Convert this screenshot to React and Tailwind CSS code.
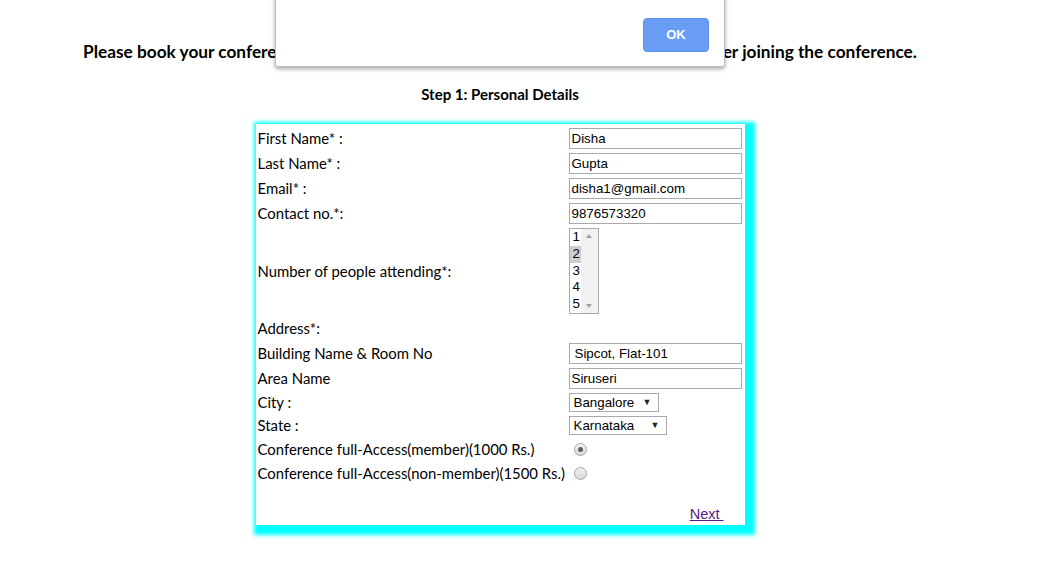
import React from 'react'

const label = "font-['Lato','Noto_Sans',sans-serif] text-[14.9px] text-black leading-none"
const field = "font-['Liberation_Sans',Arial,sans-serif] text-[13.33px] text-black"

function TextBox({ value, indent }) {
  return (
    <div className={`w-[173px] h-[21px] border border-[#a9a9a9] flex items-center ${indent ? 'pl-[5px]' : 'pl-[2px]'} ${field}`}>
      {value}
    </div>
  )
}

function DropDown({ value, width }) {
  return (
    <div className={`${width} h-[19px] border border-[#a9a9a9] flex items-center justify-between pl-[4px] pr-[6px] ${field}`}>
      <span>{value}</span>
      <span className="text-[9px] text-[#222]">▼</span>
    </div>
  )
}

function ListBox() {
  const items = ['1', '2', '3', '4', '5']
  return (
    <div className={`w-[30px] h-[86px] border border-[#a9a9a9] flex ${field}`}>
      <div className="flex flex-col">
        {items.map(n => (
          <div key={n} className={`w-[11px] h-[17px] pl-[3px] leading-[16px] ${n === '2' ? 'bg-[#cecece]' : ''}`}>{n}</div>
        ))}
      </div>
      <div className="flex-1 bg-[#f1f1f1] flex flex-col items-center justify-between py-[5px]">
        <div className="w-0 h-0 border-l-[3.5px] border-r-[3.5px] border-b-[4px] border-l-transparent border-r-transparent border-b-[#a3a3a3]" />
        <div className="w-0 h-0 border-l-[3.5px] border-r-[3.5px] border-t-[4px] border-l-transparent border-r-transparent border-t-[#a3a3a3]" />
      </div>
    </div>
  )
}

function Radio({ checked }) {
  return (
    <div className="ml-[5px] w-[13px] h-[13px] rounded-full border border-[#a6a6a6] bg-gradient-to-b from-[#f2f2f2] to-[#d8d8d8] flex items-center justify-center">
      {checked && <div className="w-[5px] h-[5px] rounded-full bg-[#5e5e5e]" />}
    </div>
  )
}

function Row({ h, text, children }) {
  return (
    <div className={`flex ${h}`}>
      <div className={`w-[313px] pl-[2px] flex items-center ${label}`}>{text}</div>
      <div className="flex items-center">{children}</div>
    </div>
  )
}

export default function App() {
  return (
    <div className="relative w-[1037px] h-[571px] bg-white overflow-hidden">
      <div className="w-[1000px] flex flex-col items-center">
        <h2 className="mt-[41px] font-['Lato','Noto_Sans',sans-serif] font-bold text-[17.25px] leading-[22px] text-black whitespace-nowrap">
          Please book your conference tickets here. Your passes will be mailed to you soon after joining the conference.
        </h2>
        <h4 className="mt-[22px] font-['Lato','Noto_Sans',sans-serif] font-bold text-[15px] leading-[18px] text-black">
          Step 1: Personal Details
        </h4>
        <div className="mt-[21px] w-[489px] bg-white pt-[2px] shadow-[4px_4px_4px_6px_#00ffff]">
          <Row h="h-[25px]" text="First Name* :"><TextBox value="Disha" /></Row>
          <Row h="h-[25px]" text="Last Name* :"><TextBox value="Gupta" /></Row>
          <Row h="h-[25px]" text="Email* :"><TextBox value="disha1@gmail.com" /></Row>
          <Row h="h-[25px]" text="Contact no.*:"><TextBox value="9876573320" /></Row>
          <Row h="h-[90px]" text="Number of people attending*:"><ListBox /></Row>
          <Row h="h-[25px]" text="Address*:" />
          <Row h="h-[25px]" text="Building Name & Room No"><TextBox value="Sipcot, Flat-101" indent /></Row>
          <Row h="h-[25px]" text="Area Name"><TextBox value="Siruseri" /></Row>
          <Row h="h-[23px]" text="City :"><DropDown value="Bangalore" width="w-[90px]" /></Row>
          <Row h="h-[23px]" text="State :"><DropDown value="Karnataka" width="w-[98px]" /></Row>
          <Row h="h-[24px]" text="Conference full-Access(member)(1000 Rs.)"><Radio checked /></Row>
          <Row h="h-[24px]" text="Conference full-Access(non-member)(1500 Rs.)"><Radio /></Row>
          <div className="h-[20px]" />
          <div className="h-[20px] flex items-center justify-end pr-[21px]">
            <a href="#" className="font-['Liberation_Sans',Arial,sans-serif] text-[14.5px] text-[#551a8b] underline whitespace-pre">Next </a>
          </div>
        </div>
      </div>

      <div className="absolute left-[275px] top-[-10px] w-[450px] h-[77px] bg-white border border-[#bdbdbd] rounded-b-[3px] shadow-[0_2px_4px_rgba(0,0,0,0.35)]">
        <button className="absolute left-[367px] top-[27px] w-[66px] h-[34px] rounded-[4px] bg-[#699df5] border border-[#5d93ef] text-white font-['Liberation_Sans',Arial,sans-serif] font-bold text-[13px]">
          OK
        </button>
      </div>
    </div>
  )
}
